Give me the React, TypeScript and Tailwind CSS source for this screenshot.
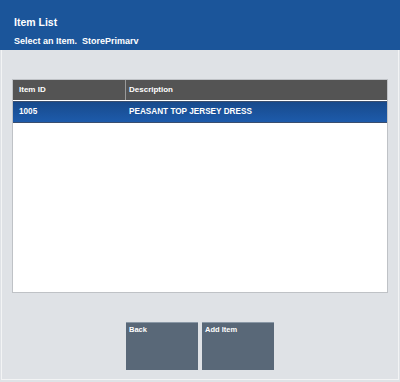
export default function App() {
  return (
    <div className="flex h-[382px] w-[400px] flex-col bg-[#dfe2e6] font-['Liberation_Sans',Arial,sans-serif] font-bold text-white">
      <div className="h-[50px] shrink-0 bg-[#1b559a] px-[14px] pt-[16px]">
        <div className="text-[10.5px] leading-[12px]">Item List</div>
        <div className="mt-[8px] whitespace-pre text-[9px] leading-[11px]">Select an Item.  StorePrimarv</div>
      </div>
      <div className="flex flex-1 flex-col px-[1px] pb-[2px]">
        <div className="flex flex-1 flex-col border-x border-b border-[#f3f4f5] pt-[29px]">
          <div className="mx-[10px] flex h-[214px] flex-col border border-[#bfc2c6] bg-white">
            <div className="flex h-[20px] shrink-0 bg-[#545454] text-[8px] leading-[20px]">
              <div className="w-[113px] border-r border-[#9a9a9a] pl-[6px]">Item ID</div>
              <div className="pl-[3px]">Description</div>
            </div>
            <div className="mt-[1px] flex h-[22px] border-y border-[#3a4e6e] bg-gradient-to-b from-[#184a8c] to-[#1d5bab] text-[8.2px] leading-[20px]">
              <div className="w-[113px] pl-[6px]">1005</div>
              <div className="pl-[3px]">PEASANT TOP JERSEY DRESS</div>
            </div>
          </div>
          <div className="mt-[29px] flex justify-center gap-[4px]">
            <button className="h-[48px] w-[72px] border-t border-[#8a98a6] bg-[#596878] px-[3px] pt-[2px] text-left text-[7.5px] leading-[9px] text-white">
              <div className="h-full">Back</div>
            </button>
            <button className="h-[48px] w-[72px] border-t border-[#8a98a6] bg-[#596878] px-[3px] pt-[2px] text-left text-[7.5px] leading-[9px] text-white">
              <div className="h-full">Add Item</div>
            </button>
          </div>
        </div>
      </div>
    </div>
  );
}
